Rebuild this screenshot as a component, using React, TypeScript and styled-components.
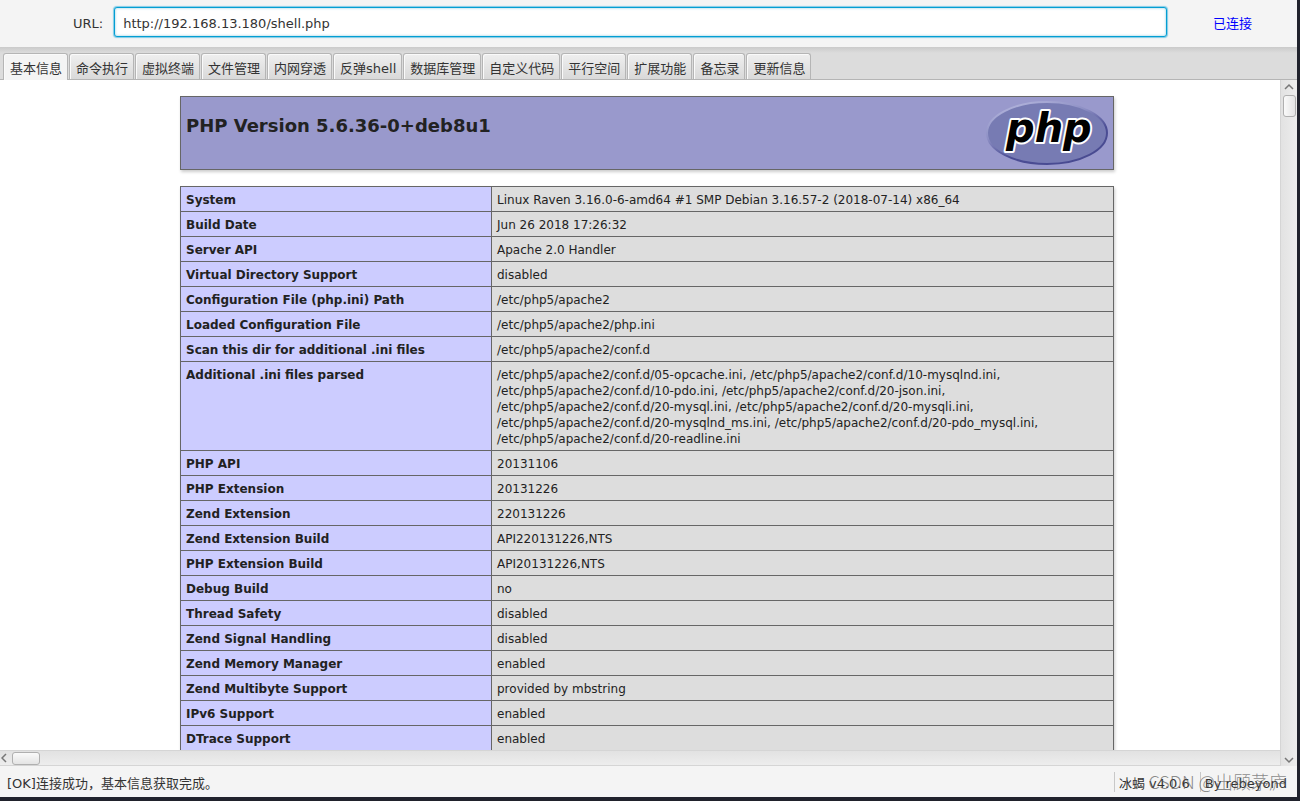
import React, { useState } from "react";
import styled, { createGlobalStyle } from "styled-components";

const GlobalStyle = createGlobalStyle`
  *, *::before, *::after { box-sizing: border-box; }
  body {
    margin: 0;
    overflow: hidden;
    background: #20222c;
    color: #333;
    font: 13px/16px "DejaVu Sans", "Noto Sans CJK SC", sans-serif;
  }
  button, input { font: inherit; color: inherit; }
`;

const Window = styled.div`
  display: flex;
  flex-direction: column;
  height: 100vh;
  padding: 0 3px 4px 0;
  background: #20222c;
`;

const UrlBar = styled.header`
  display: flex;
  align-items: center;
  height: 47px;
  flex: none;
  padding: 0 45px 3px 73px;
  background: #f4f4f4;
`;

const UrlLabel = styled.label`
  padding: 4px 11px 0 0;
`;

const UrlInput = styled.input`
  flex: 1;
  min-width: 0;
  height: 30px;
  padding: 2px 8px 0;
  border: 1px solid #039ed3;
  border-radius: 3px;
  background: #fff;
  box-shadow: 0 0 1px 1px #81cbe6, inset 0 0 2px 1px #c9e7f1;
  outline: none;
`;

const Connection = styled.output`
  padding: 4px 0 0 46px;
  color: #00f;
`;

const TabStrip = styled.nav`
  display: flex;
  align-items: flex-end;
  gap: 1px;
  flex: none;
  height: 33px;
  padding: 0 3px;
  border-bottom: 1px solid #b5b5b5;
  background: linear-gradient(#cacaca, #dcdcdc 6px);
`;

const Tab = styled.button<{ $active: boolean }>`
  flex: none;
  height: ${(p) => (p.$active ? 27 : 26)}px;
  margin-bottom: ${(p) => (p.$active ? -1 : 0)}px;
  padding: ${(p) => (p.$active ? "4px 5px 1px 6px" : "4px 5px 0 6px")};
  border: 1px solid #b5b5b5;
  border-bottom: 0;
  border-radius: 3px 3px 0 0;
  background: ${(p) => (p.$active ? "#f4f4f4" : "linear-gradient(#efefef, #d9d9d9)")};
  box-shadow: inset 1px 1px #fafafa;
  line-height: 20px;
  white-space: nowrap;
`;

const Viewport = styled.div`
  display: grid;
  grid-template: minmax(0, 1fr) 16px / minmax(0, 1fr) 17px;
  flex: 1;
  min-height: 0;
  background: #fff;
`;

const Page = styled.main`
  overflow: hidden;
  padding: 16px 0 0 14px;
  background: #fff;
  color: #222;
  font-size: 12px;
`;

const Sheet = styled.div`
  display: flex;
  flex-direction: column;
  gap: 16px;
  width: 934px;
  max-width: 100%;
  margin: 0 auto;
`;

const Banner = styled.section`
  display: flex;
  justify-content: space-between;
  align-items: flex-start;
  height: 74px;
  padding: 3px 5px;
  border: 1px solid #666;
  background: #9999cc;
  box-shadow: 1px 2px 3px #ccc;
`;

const Version = styled.h1`
  margin: 14px 0 0;
  font-size: 18px;
  line-height: 24px;
`;

const InfoTable = styled.table`
  width: 100%;
  border-collapse: collapse;
  table-layout: fixed;
  box-shadow: 1px 2px 3px #ccc;

  th, td {
    padding: 5px 5px 3px;
    border: 1px solid #666;
    vertical-align: top;
    text-align: left;
  }
  th { width: 311px; background: #ccccff; }
  td { background: #dddddd; }
`;

const ScrollTrack = styled.div<{ $vertical?: boolean }>`
  display: flex;
  flex-direction: ${(p) => (p.$vertical ? "column" : "row")};
  align-items: center;
  grid-row: ${(p) => (p.$vertical ? "1 / 3" : "2")};
  grid-column: ${(p) => (p.$vertical ? "2" : "1")};
  border: solid #d5d5d5;
  border-width: ${(p) => (p.$vertical ? "0 0 0 1px" : "1px 0")};
  background: linear-gradient(${(p) => (p.$vertical ? "to right" : "to bottom")}, #e2e2e2, #ededed);
`;

const ScrollButton = styled.button<{ $vertical?: boolean }>`
  display: flex;
  align-items: center;
  justify-content: center;
  width: ${(p) => (p.$vertical ? 14 : 11)}px;
  height: ${(p) => (p.$vertical ? 15 : 14)}px;
  padding: 0;
  border: 0;
  background: none;
  flex: none;
  color: #777;
`;

const Thumb = styled.div<{ $vertical?: boolean }>`
  flex: none;
  width: ${(p) => (p.$vertical ? 13 : 28)}px;
  height: ${(p) => (p.$vertical ? 22 : 13)}px;
  margin-left: ${(p) => (p.$vertical ? 0 : 1)}px;
  border: 1px solid #b0b0b0;
  border-radius: 3px;
  background: linear-gradient(${(p) => (p.$vertical ? "to right" : "to bottom")}, #fafafa, #e4e4e4);
`;

const Spacer = styled.div`
  flex: 1;
`;

const StatusBar = styled.footer`
  position: relative;
  display: flex;
  align-items: center;
  flex: none;
  height: 31px;
  padding: 0 10px 0 7px;
  background: #f4f4f4;
`;

const StatusText = styled.span`
  flex: 1;
  padding-top: 4px;
`;

const StatusCell = styled.span`
  height: 20px;
  padding: 4px 10px 0 4px;
  border-left: 1px solid #c8c8c8;
  white-space: nowrap;

  & + & { padding-right: 0; }
`;

const Watermark = styled.span`
  position: absolute;
  right: 10px;
  top: 3px;
  color: rgba(90, 90, 90, 0.7);
  font: 300 18px/24px "Noto Sans CJK SC", sans-serif;
  white-space: nowrap;
  pointer-events: none;
`;

const tabs = [
  "基本信息", "命令执行", "虚拟终端", "文件管理", "内网穿透", "反弹shell",
  "数据库管理", "自定义代码", "平行空间", "扩展功能", "备忘录", "更新信息",
];

const rows: [string, string[]][] = [
  ["System", ["Linux Raven 3.16.0-6-amd64 #1 SMP Debian 3.16.57-2 (2018-07-14) x86_64"]],
  ["Build Date", ["Jun 26 2018 17:26:32"]],
  ["Server API", ["Apache 2.0 Handler"]],
  ["Virtual Directory Support", ["disabled"]],
  ["Configuration File (php.ini) Path", ["/etc/php5/apache2"]],
  ["Loaded Configuration File", ["/etc/php5/apache2/php.ini"]],
  ["Scan this dir for additional .ini files", ["/etc/php5/apache2/conf.d"]],
  ["Additional .ini files parsed", [
    "/etc/php5/apache2/conf.d/05-opcache.ini, /etc/php5/apache2/conf.d/10-mysqlnd.ini,",
    "/etc/php5/apache2/conf.d/10-pdo.ini, /etc/php5/apache2/conf.d/20-json.ini,",
    "/etc/php5/apache2/conf.d/20-mysql.ini, /etc/php5/apache2/conf.d/20-mysqli.ini,",
    "/etc/php5/apache2/conf.d/20-mysqlnd_ms.ini, /etc/php5/apache2/conf.d/20-pdo_mysql.ini,",
    "/etc/php5/apache2/conf.d/20-readline.ini",
  ]],
  ["PHP API", ["20131106"]],
  ["PHP Extension", ["20131226"]],
  ["Zend Extension", ["220131226"]],
  ["Zend Extension Build", ["API220131226,NTS"]],
  ["PHP Extension Build", ["API20131226,NTS"]],
  ["Debug Build", ["no"]],
  ["Thread Safety", ["disabled"]],
  ["Zend Signal Handling", ["disabled"]],
  ["Zend Memory Manager", ["enabled"]],
  ["Zend Multibyte Support", ["provided by mbstring"]],
  ["IPv6 Support", ["enabled"]],
  ["DTrace Support", ["enabled"]],
];

const PhpLogo = () => (
  <svg width="122" height="66" viewBox="0 0 122 66" role="img" aria-label="PHP logo">
    <defs>
      <linearGradient id="rim" x1="0.2" y1="0" x2="0.8" y2="1">
        <stop offset="0" stopColor="#b3b5dc" />
        <stop offset="0.35" stopColor="#8d8fc4" />
        <stop offset="0.65" stopColor="#4b4d94" />
        <stop offset="1" stopColor="#484a90" />
      </linearGradient>
    </defs>
    <ellipse cx="61" cy="33" rx="60" ry="31" fill="#777bb3" stroke="url(#rim)" strokeWidth="2" />
    <text
      x="20"
      y="42"
      fontFamily="DejaVu Sans, sans-serif"
      fontSize="40"
      fontWeight="700"
      fontStyle="italic"
      fill="#000"
      stroke="#fff"
      strokeWidth="4"
      strokeLinejoin="round"
      paintOrder="stroke"
    >
      php
    </text>
  </svg>
);

const Chevron = ({ d }: { d: string }) => (
  <svg width="10" height="10" viewBox="0 0 10 10" fill="none" stroke="currentColor" strokeWidth="1.5" aria-hidden="true">
    <path d={d} />
  </svg>
);

export default function App() {
  const [active, setActive] = useState(0);
  return (
    <>
      <GlobalStyle />
      <Window>
        <UrlBar>
          <UrlLabel htmlFor="url">URL:</UrlLabel>
          <UrlInput id="url" type="text" defaultValue="http://192.168.13.180/shell.php" />
          <Connection htmlFor="url">已连接</Connection>
        </UrlBar>
        <TabStrip>
          {tabs.map((name, i) => (
            <Tab key={name} type="button" $active={i === active} onClick={() => setActive(i)}>
              {name}
            </Tab>
          ))}
        </TabStrip>
        <Viewport>
          <Page>
            <Sheet>
              <Banner>
                <Version>PHP Version 5.6.36-0+deb8u1</Version>
                <PhpLogo />
              </Banner>
              <InfoTable>
                <tbody>
                  {rows.map(([name, lines]) => (
                    <tr key={name}>
                      <th scope="row">{name}</th>
                      <td>
                        {lines.map((line, i) => (
                          <React.Fragment key={line}>
                            {i > 0 && <br />}
                            {line}
                          </React.Fragment>
                        ))}
                      </td>
                    </tr>
                  ))}
                </tbody>
              </InfoTable>
            </Sheet>
          </Page>
          <ScrollTrack $vertical>
            <ScrollButton $vertical type="button" aria-label="Scroll up"><Chevron d="M1 6l4-4 4 4" /></ScrollButton>
            <Thumb $vertical />
            <Spacer />
            <ScrollButton $vertical type="button" aria-label="Scroll down"><Chevron d="M1 4l4 4 4-4" /></ScrollButton>
          </ScrollTrack>
          <ScrollTrack>
            <ScrollButton type="button" aria-label="Scroll left"><Chevron d="M5 1L1 5l4 4" /></ScrollButton>
            <Thumb />
          </ScrollTrack>
        </Viewport>
        <StatusBar>
          <StatusText>[OK]连接成功，基本信息获取完成。</StatusText>
          <StatusCell>冰蝎 v4.0.6</StatusCell>
          <StatusCell>By rebeyond</StatusCell>
          <Watermark>CSDN @出顾茅庐</Watermark>
        </StatusBar>
      </Window>
    </>
  );
}
